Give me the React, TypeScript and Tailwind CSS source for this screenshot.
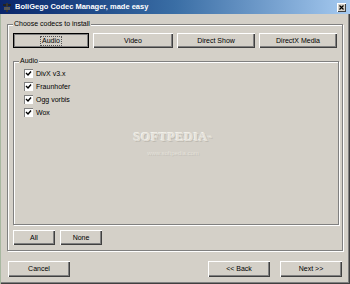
import React from "react";

const FONT = { fontFamily: '"Liberation Sans", Arial, sans-serif' };

function Btn({ label, className = "", focused = false }: { label: string; className?: string; focused?: boolean }) {
  return (
    <div
      className={
        "flex h-[15px] items-center justify-center bg-[#d4d0c8] text-[7px] text-black " +
        (focused
          ? "border border-black shadow-[inset_1px_1px_0_#808080,inset_-1px_-1px_0_#808080] "
          : "shadow-[inset_1px_1px_0_#ffffff,inset_-1px_-1px_0_#404040,inset_-2px_-2px_0_#808080] ") +
        className
      }
    >
      <span className={focused ? "border border-dotted border-[#555] px-[1px] leading-[8px]" : "leading-[8px]"}>{label}</span>
    </div>
  );
}

function Check({ label }: { label: string }) {
  return (
    <div className="flex h-[13px] items-center gap-[3px]">
      <div className="flex h-[9px] w-[9px] items-center justify-center bg-white shadow-[inset_1px_1px_0_#808080,inset_-1px_-1px_0_#ffffff]">
        <svg width="7" height="7" viewBox="0 0 7 7">
          <path d="M1 3 L3 5 L6 1.5" stroke="#000" strokeWidth="1.4" fill="none" />
        </svg>
      </div>
      <span className="text-[7px] leading-[8px] text-black">{label}</span>
    </div>
  );
}

function Group({ label, className = "", children }: { label: string; className?: string; children?: React.ReactNode }) {
  return (
    <div className={"relative border border-[#808080] shadow-[inset_1px_1px_0_#ffffff,1px_1px_0_#ffffff] " + className}>
      <div className="absolute -top-[5px] left-[5px] bg-[#d4d0c8] px-[1px] text-[7px] leading-[8px] text-black">{label}</div>
      {children}
    </div>
  );
}

export default function App() {
  return (
    <div
      style={FONT}
      className="relative flex h-[284px] w-[350px] flex-col overflow-hidden bg-[#d4d0c8] shadow-[inset_1px_0_0_#a8b8a0,inset_-1px_-1px_0_#404040,inset_-2px_-2px_0_#808080]"
    >
      {/* Title bar */}
      <div className="flex h-[14px] shrink-0 items-center bg-gradient-to-r from-[#0a246a] via-[#3a6ea5] to-[#a6caf0] pl-[3px] pr-[4px]">
        <div className="mr-[4px] flex h-[9px] w-[8px] items-center justify-center">
          <svg width="8" height="9" viewBox="0 0 8 9">
            <rect x="0" y="1" width="8" height="2" fill="#222" />
            <rect x="3" y="0" width="2" height="9" fill="#333" />
            <rect x="1" y="4" width="6" height="3" fill="#555" />
          </svg>
        </div>
        <span className="text-[7.5px] font-bold leading-[10px] text-white">BoliGego Codec Manager, made easy</span>
        <div className="ml-auto flex h-[9px] w-[9px] items-center justify-center bg-[#d4d0c8] shadow-[inset_1px_1px_0_#ffffff,inset_-1px_-1px_0_#404040]">
          <svg width="5" height="5" viewBox="0 0 5 5">
            <path d="M0.5 0.5 L4.5 4.5 M4.5 0.5 L0.5 4.5" stroke="#000" strokeWidth="1.2" />
          </svg>
        </div>
      </div>

      {/* Outer group */}
      <Group label="Choose codecs to install" className="mx-[7px] mt-[10px] flex h-[227px] flex-col px-[5px]">
        <div className="mt-[8px] flex gap-[4px]">
          <Btn label="Audio" focused className="w-[76px]" />
          <Btn label="Video" className="w-[80px]" />
          <Btn label="Direct Show" className="w-[78px]" />
          <Btn label="DirectX Media" className="w-[78px]" />
        </div>

        <Group label="Audio" className="mt-[13px] h-[164px] w-[326px] pl-[10px] pt-[5px]">
          <Check label="DivX v3.x" />
          <Check label="Fraunhofer" />
          <Check label="Ogg vorbis" />
          <Check label="Wox" />
        </Group>

        <div className="mt-[5px] flex gap-[5px]">
          <Btn label="All" className="w-[42px]" />
          <Btn label="None" className="w-[42px]" />
        </div>
      </Group>

      {/* Bottom buttons */}
      <div className="mt-[10px] flex px-[8px]">
        <Btn label="Cancel" className="h-[16px] w-[62px]" />
        <Btn label="<< Back" className="ml-auto h-[16px] w-[62px]" />
        <Btn label="Next >>" className="ml-[10px] h-[16px] w-[62px]" />
      </div>

      {/* Watermark */}
      <div className="pointer-events-none absolute left-[133px] top-[131px] flex w-[80px] flex-col items-center">
        <span
          className="text-[12.5px] font-bold leading-[12px] tracking-[0.3px] text-[#e4e1da] [text-shadow:-1px_-1px_0_#f2f0ea,1px_1px_0_#bfbbb2]"
          style={{ fontFamily: '"Liberation Serif", "Times New Roman", serif' }}
        >
          SOFTPEDIA<sup className="text-[4px]">™</sup>
        </span>
        <span className="mt-[7px] text-[6px] leading-[6px] text-[#e4e1da] [text-shadow:1px_1px_0_#c4c0b8]">www.softpedia.com</span>
      </div>
    </div>
  );
}
